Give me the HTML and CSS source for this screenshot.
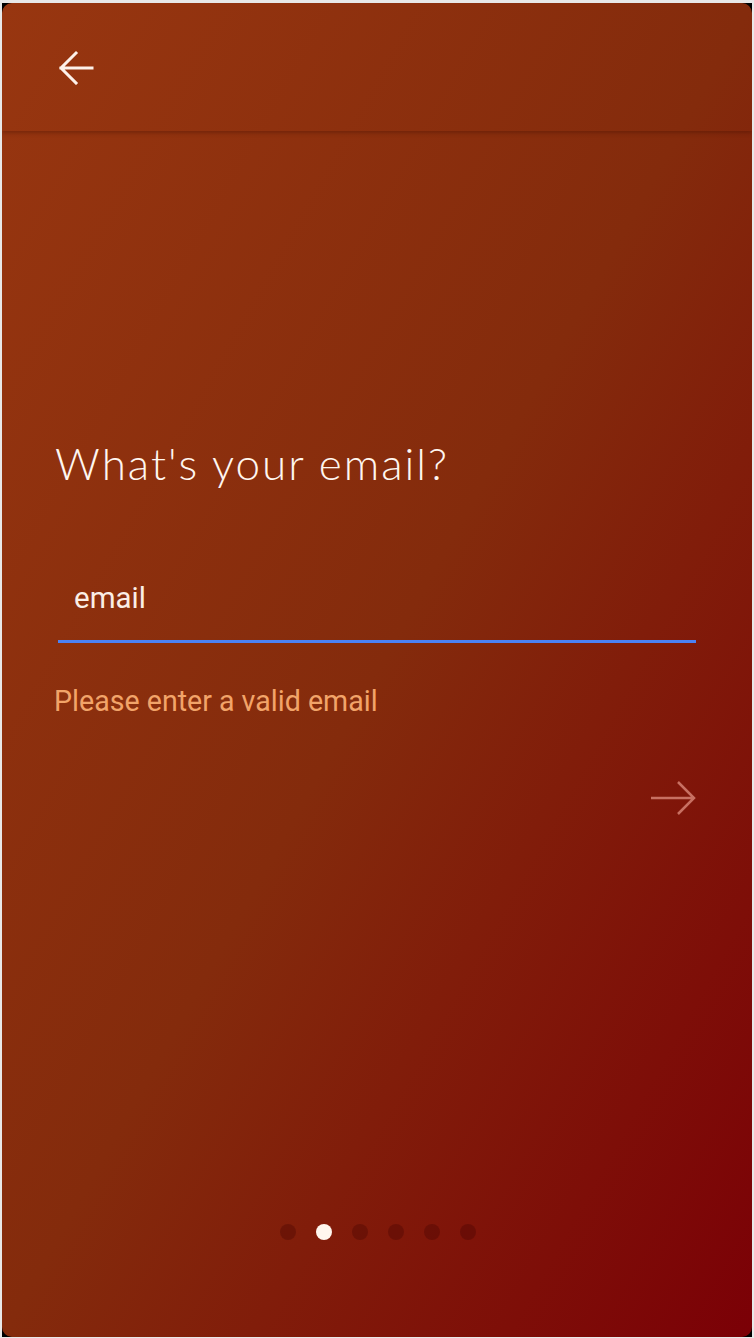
FILE: index.html
```html
<!DOCTYPE html>
<html>
<head>
<meta charset="utf-8">
<link rel="stylesheet" href="styles.css">
</head>
<body>
<div class="device">
  <div class="screen">
    <header class="appbar">
      <button class="back" aria-label="Back">
        <svg width="40" height="36" viewBox="0 0 40 36">
          <path d="M34 19H3 M18 4 L3 19 L18 34" fill="none" stroke="#fdf1ea" stroke-width="3" stroke-linecap="square" stroke-linejoin="miter"/>
        </svg>
      </button>
    </header>
    <main class="content">
      <h1 class="title">What's your email?</h1>
      <div class="field">
        <div class="input">email</div>
        <div class="underline"></div>
      </div>
      <p class="error">Please enter a valid email</p>
      <div class="next-row">
        <svg class="next" width="48" height="36" viewBox="0 0 48 36">
          <path d="M2 17H45 M29 1 L45 17 L29 33" fill="none" stroke="#c87062" stroke-width="2.5"/>
        </svg>
      </div>
    </main>
    <nav class="dots">
      <span class="dot"></span>
      <span class="dot active"></span>
      <span class="dot"></span>
      <span class="dot"></span>
      <span class="dot"></span>
      <span class="dot"></span>
    </nav>
  </div>
</div>
</body>
</html>
```

FILE: styles.css
```css
html, body {
  margin: 0;
  padding: 0;
  background: #e8e8e8;
}
.device {
  margin: 3px 2px 1px 2px;
  background: #000;
  height: 1334px;
}
.screen {
  height: 1334px;
  border-radius: 10px;
  overflow: hidden;
  background: linear-gradient(to bottom right, #983610 0%, #842b0c 50%, #7b0006 100%);
  display: flex;
  flex-direction: column;
  font-family: Roboto, "Liberation Sans", sans-serif;
}
.appbar {
  height: 128px;
  flex: none;
  display: flex;
  align-items: center;
  padding-left: 56px;
  box-shadow: 0 2px 4px rgba(60, 15, 0, 0.35);
  position: relative;
  z-index: 1;
}
.back {
  background: none;
  border: 0;
  padding: 0;
  margin: 0;
  display: flex;
}
.content {
  flex: 1;
  padding: 0 55px 0 54px;
}
.title {
  margin: 306px 0 0 -1px;
  font-family: "Lato", sans-serif;
  font-weight: 300;
  font-size: 44px;
  line-height: 52px;
  color: #fff6f0;
  letter-spacing: 2px;
}
.field {
  margin-top: 92px;
  margin-left: 2px;
  margin-right: 1px;
}
.input {
  padding-left: 16px;
  font-size: 29.5px;
  line-height: 34px;
  color: #fbeee6;
  height: 34px;
}
.underline {
  margin-top: 25px;
  height: 3px;
  background: #4b82f4;
}
.error {
  margin: 41px 0 0 -2px;
  font-size: 28.6px;
  line-height: 34px;
  color: #f2a469;
}
.next-row {
  display: flex;
  justify-content: flex-end;
  margin-top: 63px;
}
.dots {
  display: flex;
  justify-content: center;
  gap: 20px;
  padding-bottom: 97px;
  padding-left: 2px;
}
.dot {
  width: 16px;
  height: 16px;
  border-radius: 50%;
  background: rgba(60, 0, 0, 0.3);
}
.dot.active {
  background: #fff6ee;
}
```
